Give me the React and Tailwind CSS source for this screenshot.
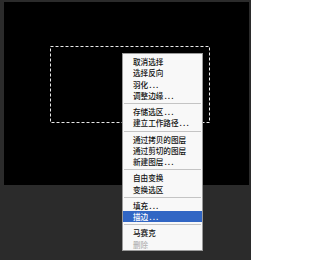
import React from "react";

const groups = [
  ["取消选择", "选择反向", "羽化...", "调整边缘..."],
  ["存储选区...", "建立工作路径..."],
  ["通过拷贝的图层", "通过剪切的图层", "新建图层..."],
  ["自由变换", "变换选区"],
  ["填充...", "描边..."],
  ["马赛克", "删除"],
];

function Item({ label }) {
  const active = label === "描边...";
  const disabled = label === "删除";
  const dots = label.endsWith("...");
  const text = dots ? label.slice(0, -3) : label;
  return (
    <div
      className={
        "h-[11.25px] leading-[11.25px] pl-[10px] whitespace-nowrap " +
        (active ? "bg-[#3166c4] text-white" : disabled ? "text-[#b4b4b4]" : "text-[#111111]")
      }
    >
      {text}
      {dots && <span className="tracking-[1.2px] pl-[1px]">...</span>}
    </div>
  );
}

export default function App() {
  return (
    <div
      className="relative w-[251px] h-[260px] bg-[#2b2b2b] pt-[2px] pl-[4px] pr-[2px] overflow-hidden"
      style={{ fontFamily: '"Noto Sans CJK SC", "Noto Sans", sans-serif' }}
    >
      {/* canvas */}
      <div className="relative h-[183px] bg-black">
        {/* marching ants selection */}
        <svg className="absolute left-[46px] top-[44px]" width="160" height="77">
          <rect x="0.5" y="0.5" width="159" height="76" fill="none" stroke="#e8e8e8" strokeWidth="1" strokeDasharray="3 2" />
        </svg>
      </div>

      {/* context menu */}
      <div className="absolute left-[122px] top-[53px] w-[81px] bg-[#f8f8f8] border border-[#9a9a9a] pt-[2px] text-[7.6px] font-medium">
        {groups.map((g, gi) => (
          <div key={gi}>
            {gi > 0 && (
              <div className="h-[5px] flex items-center px-[1px]">
                <div className="w-full h-[1px] bg-[#c4c4c4]" />
              </div>
            )}
            {g.map((l) => (
              <Item key={l} label={l} />
            ))}
          </div>
        ))}
      </div>
    </div>
  );
}
